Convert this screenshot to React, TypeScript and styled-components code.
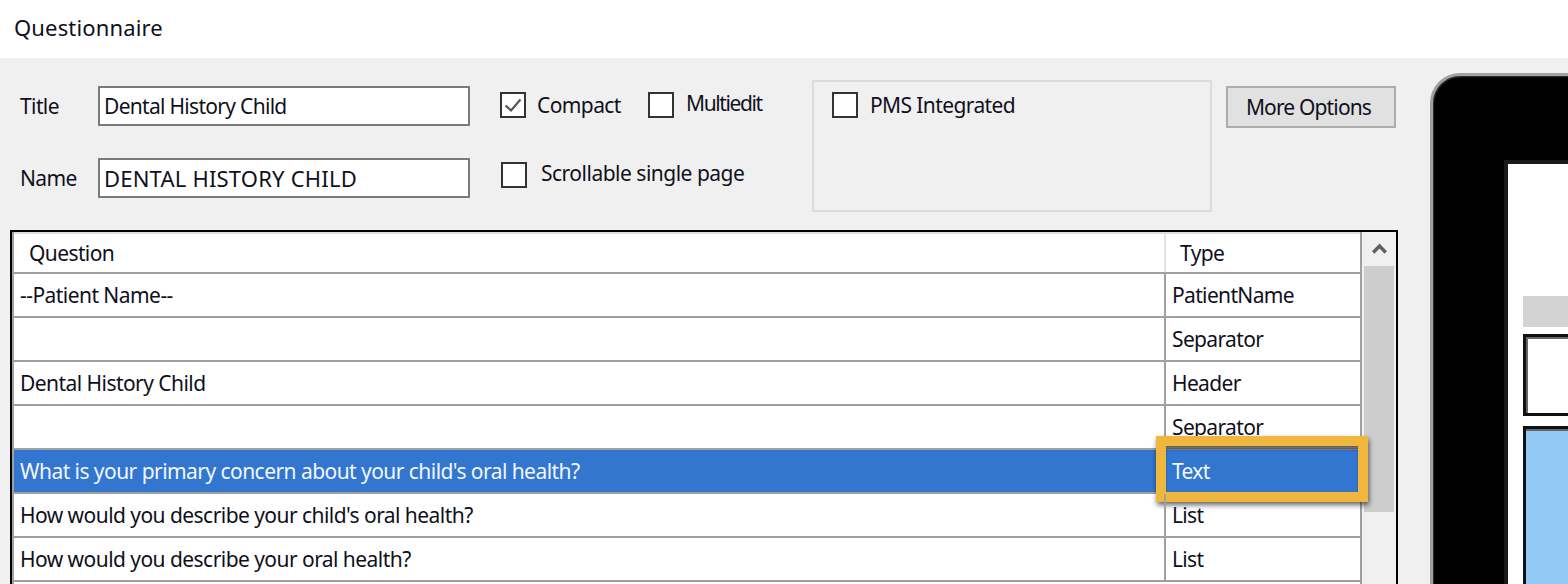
import React from "react";
import styled, { createGlobalStyle } from "styled-components";

const Global = createGlobalStyle`
  html, body { margin: 0; padding: 0; background: #f0f0f0; overflow: hidden; }
  * { box-sizing: border-box; }
  body { font-family: "Noto Sans", "Open Sans", sans-serif; font-size: 21px; letter-spacing: -0.6px; color: #10101c; }
`;

const Page = styled.div`
  width: 1568px;
  height: 584px;
  display: flex;
  flex-direction: column;
  overflow: hidden;
`;

const TitleBar = styled.div`
  height: 58px;
  flex: none;
  background: #fff;
  padding: 0 0 5px 14px;
  display: flex;
  align-items: center;
  font-size: 22px;
  letter-spacing: 0.15px;
`;

const Body = styled.div`
  flex: 1;
  min-height: 0;
  display: flex;
  background: #f0f0f0;
`;

const LeftPane = styled.div`
  width: 1398px;
  flex: none;
  padding-left: 10px;
`;

const TopForm = styled.div`
  height: 172px;
  display: flex;
  align-items: flex-start;
`;

const Fields = styled.div`
  width: 460px;
  flex: none;
  padding: 28px 0 0 10px;
  display: flex;
  flex-direction: column;
  gap: 32px;
`;

const Field = styled.label`
  display: flex;
  align-items: center;
  height: 40px;
`;

const FieldLabel = styled.span`
  width: 78px;
  flex: none;
`;

const TextBox = styled.div<{ $caps?: boolean }>`
  width: 372px;
  height: 40px;
  background: #fff;
  border: 2px solid #7a7a7a;
  padding-left: 4px;
  display: flex;
  align-items: center;
  font-size: ${(p) => (p.$caps ? "22px" : "21px")};
  letter-spacing: ${(p) => (p.$caps ? "0.2px" : "-0.7px")};
`;

const Options = styled.div`
  width: 342px;
  flex: none;
  padding: 34px 0 0 30px;
  display: flex;
  flex-direction: column;
  gap: 44px;
`;

const OptionRow = styled.div`
  display: flex;
  height: 26px;
`;

const Option = styled.div<{ $gap: number; $inset?: number; $width?: number }>`
  display: flex;
  align-items: center;
  gap: ${(p) => p.$gap}px;
  height: 26px;
  margin-left: ${(p) => p.$inset ?? 0}px;
  width: ${(p) => (p.$width ? `${p.$width}px` : "auto")};
`;

const OptionLabel = styled.span<{ $lift?: number; $tracking?: number }>`
  margin-bottom: ${(p) => (p.$lift ?? 0) * 2}px;
  white-space: nowrap;
  letter-spacing: ${(p) => p.$tracking ?? -0.6}px;
`;

const Box = styled.div`
  width: 26px;
  height: 26px;
  flex: none;
  background: #fff;
  border: 2px solid #333;
  display: flex;
  align-items: center;
  justify-content: center;
`;

const GroupBox = styled.div`
  width: 400px;
  height: 132px;
  flex: none;
  margin-top: 22px;
  border: 2px solid #dcdcdc;
  padding: 10px 0 0 18px;
`;

const MoreButton = styled.button`
  width: 170px;
  height: 42px;
  flex: none;
  margin: 28px 0 0 14px;
  padding: 0 5px 0 0;
  background: #e1e1e1;
  border: 2px solid #adadad;
  font: inherit;
  letter-spacing: -0.85px;
  color: inherit;
`;

const Grid = styled.div`
  border: 2px solid #000;
  border-bottom: none;
  height: 356px;
  display: flex;
  background: #f0f0f0;
`;

const GridBody = styled.div`
  width: 1350px;
  flex: none;
  background: #fff;
  border-left: 2px solid #a0a0a0;
  border-right: 2px solid #a0a0a0;
`;

const HeaderRow = styled.div`
  height: 42px;
  display: grid;
  grid-template-columns: 1152px 1fr;
  border-top: 2px solid #dedede;
  border-bottom: 2px solid #a0a0a0;
`;

const HeaderCell = styled.div<{ $pad: number; $divider?: boolean }>`
  padding-left: ${(p) => p.$pad}px;
  display: flex;
  align-items: center;
  border-right: ${(p) => (p.$divider ? "2px solid #e4e4e4" : "none")};
`;

const Row = styled.div<{ $selected?: boolean }>`
  height: 44px;
  display: grid;
  grid-template-columns: 1152px 1fr;
  border-bottom: 2px solid #a0a0a0;
  background: ${(p) => (p.$selected ? "#3276cf" : "#fff")};
  color: ${(p) => (p.$selected ? "#f2f7fd" : "inherit")};
`;

const Cell = styled.div<{ $divider?: boolean }>`
  position: relative;
  padding-left: 6px;
  display: flex;
  align-items: center;
  white-space: nowrap;
  letter-spacing: ${(p) => (p.$divider ? "-0.55px" : "-0.65px")};
  border-right: ${(p) => (p.$divider ? "2px solid #a0a0a0" : "none")};
`;

const Highlight = styled.div`
  position: absolute;
  left: -10px;
  top: -14px;
  width: 212px;
  height: 66px;
  border: 10px solid #efb73e;
  box-shadow: 1px 3px 5px rgba(0, 0, 0, 0.6), inset 0 4px 3px -1px rgba(0, 0, 0, 0.65);
  pointer-events: none;
`;

const ScrollTrack = styled.div`
  flex: 1;
  padding: 0 2px;
  display: flex;
  flex-direction: column;
`;

const ScrollUp = styled.div`
  height: 34px;
  display: flex;
  align-items: center;
  justify-content: center;
  padding-bottom: 1px;
`;

const ScrollThumb = styled.div`
  height: 246px;
  background: #cdcdcd;
`;

const Tablet = styled.div`
  width: 170px;
  height: 540px;
  flex: none;
  margin: 15px 0 0 32px;
  background: #000;
  border-top: 3px solid #a0a0a0;
  border-left: 3px solid #a0a0a0;
  border-top-left-radius: 30px;
  box-shadow: inset 1px 1px 1px #333;
  padding: 84px 0 0 71px;
`;

const Screen = styled.div`
  height: 450px;
  background: #fff;
  border-top: 4px solid #1a1a1a;
  border-left: 4px solid #1a1a1a;
  padding: 132px 0 0 15px;
  display: flex;
  flex-direction: column;
`;

const ScreenBar = styled.div`
  height: 31px;
  background: #d3d3d3;
  margin-bottom: 7px;
`;

const ScreenBox = styled.div`
  height: 82px;
  background: #fff;
  border: 3px solid #111;
  border-right: none;
  box-shadow: inset 2px 2px 0 #666;
  margin-bottom: 10px;
`;

const ScreenBlue = styled.div`
  flex: 1;
  background: #93c9f5;
  border: 3px solid #111;
  border-right: none;
  border-bottom: none;
  box-shadow: inset 0 2px 0 #666;
`;

const rows = [
  { q: "--Patient Name--", t: "PatientName" },
  { q: "", t: "Separator" },
  { q: "Dental History Child", t: "Header" },
  { q: "", t: "Separator" },
  { q: "What is your primary concern about your child's oral health?", t: "Text", selected: true },
  { q: "How would you describe your child's oral health?", t: "List" },
  { q: "How would you describe your oral health?", t: "List" },
];

export default function App() {
  return (
    <Page>
      <Global />
      <TitleBar>Questionnaire</TitleBar>
      <Body>
        <LeftPane>
          <TopForm>
            <Fields>
              <Field>
                <FieldLabel>Title</FieldLabel>
                <TextBox>Dental History Child</TextBox>
              </Field>
              <Field>
                <FieldLabel>Name</FieldLabel>
                <TextBox $caps>DENTAL HISTORY CHILD</TextBox>
              </Field>
            </Fields>
            <Options>
              <OptionRow>
                <Option $gap={11} $width={148}>
                  <Box>
                    <svg width="20" height="20" viewBox="0 0 20 20" fill="none">
                      <path d="M2.5 10.5 L8 15.5 L17.5 4.5" stroke="#555" strokeWidth="2.2" />
                    </svg>
                  </Box>
                  <OptionLabel>Compact</OptionLabel>
                </Option>
                <Option $gap={12}>
                  <Box />
                  <OptionLabel $lift={2} $tracking={-1.4}>Multiedit</OptionLabel>
                </Option>
              </OptionRow>
              <Option $gap={14} $inset={1}>
                <Box />
                <OptionLabel $lift={2} $tracking={-0.5}>Scrollable single page</OptionLabel>
              </Option>
            </Options>
            <GroupBox>
              <Option $gap={12}>
                <Box />
                <OptionLabel>PMS Integrated</OptionLabel>
              </Option>
            </GroupBox>
            <MoreButton>More Options</MoreButton>
          </TopForm>
          <Grid>
            <GridBody>
              <HeaderRow>
                <HeaderCell $pad={15} $divider>Question</HeaderCell>
                <HeaderCell $pad={14}>Type</HeaderCell>
              </HeaderRow>
              {rows.map((r, i) => (
                <Row key={i} $selected={r.selected}>
                  <Cell $divider>{r.q}</Cell>
                  <Cell>
                    {r.t}
                    {r.selected && <Highlight />}
                  </Cell>
                </Row>
              ))}
            </GridBody>
            <ScrollTrack>
              <ScrollUp>
                <svg width="15" height="11" viewBox="0 0 15 11" fill="none">
                  <path d="M1.2 9.5 L7.5 3 L13.8 9.5" stroke="#606060" strokeWidth="3.4" />
                </svg>
              </ScrollUp>
              <ScrollThumb />
            </ScrollTrack>
          </Grid>
        </LeftPane>
        <Tablet>
          <Screen>
            <ScreenBar />
            <ScreenBox />
            <ScreenBlue />
          </Screen>
        </Tablet>
      </Body>
    </Page>
  );
}
